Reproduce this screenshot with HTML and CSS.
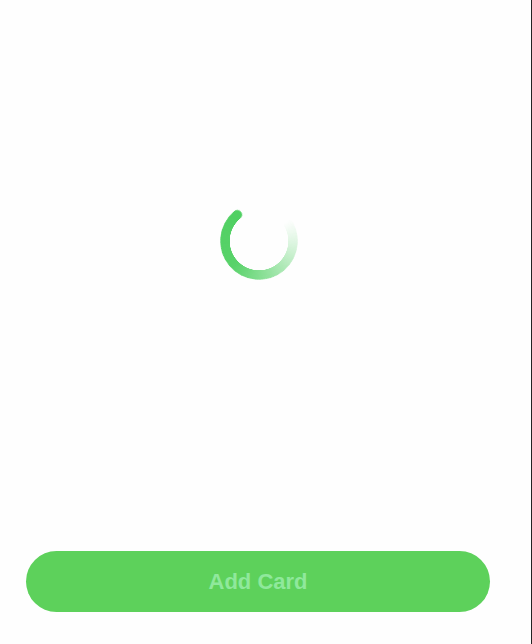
FILE: index.html
```html
<!DOCTYPE html>
<html lang="en">
<head>
<meta charset="utf-8">
<title>Add Card</title>
<link rel="stylesheet" href="styles.css">
</head>
<body>
<div class="page">
  <main class="screen">
    <div class="loader">
      <div class="spinner" role="progressbar" aria-label="Loading"></div>
    </div>
    <div class="fill"></div>
    <button class="add-btn" type="button">Add Card</button>
  </main>
  <div class="gutter"></div>
  <div class="edge"></div>
</div>
</body>
</html>
```
FILE: styles.css
```css
* { box-sizing: border-box; }
html, body {
  margin: 0;
  padding: 0;
  background: #fefefe;
}
body {
  font-family: "Liberation Sans", Arial, Helvetica, sans-serif;
}
.page {
  display: flex;
  height: 644px;
  width: 532px;
}
.screen {
  width: 516px;
  display: flex;
  flex-direction: column;
  padding: 202px 0 32px;
}
.gutter { flex: 1; }
.edge {
  width: 1px;
  background: #232323;
}
.loader {
  display: flex;
  justify-content: center;
  padding-left: 2px;
}
.spinner {
  position: relative;
  width: 78px;
  height: 78px;
  border-radius: 50%;
  transform: rotate(-40deg);
  background: conic-gradient(
    rgba(80, 208, 98, 0) 0deg,
    rgba(80, 208, 98, 0) 95deg,
    rgba(80, 208, 98, 0.2) 135deg,
    rgba(80, 208, 98, 0.6) 200deg,
    rgba(80, 208, 98, 0.95) 265deg,
    rgba(80, 208, 98, 1) 360deg
  );
  -webkit-mask: radial-gradient(farthest-side, transparent calc(100% - 10px), #000 calc(100% - 9.5px));
  mask: radial-gradient(farthest-side, transparent calc(100% - 10px), #000 calc(100% - 9.5px));
  filter: blur(0.6px);
}
.spinner::after {
  content: "";
  position: absolute;
  top: 0;
  left: calc(50% - 5px);
  width: 10px;
  height: 10px;
  border-radius: 50%;
  background: #50d062;
}
.fill { flex: 1; }
.add-btn {
  margin: 0 26px;
  height: 61px;
  border: none;
  border-radius: 31px;
  background: #5dd15b;
  color: #8fe89c;
  font-family: "Liberation Sans", Arial, Helvetica, sans-serif;
  font-weight: 700;
  font-size: 22px;
  padding: 0;
  cursor: pointer;
}
```
